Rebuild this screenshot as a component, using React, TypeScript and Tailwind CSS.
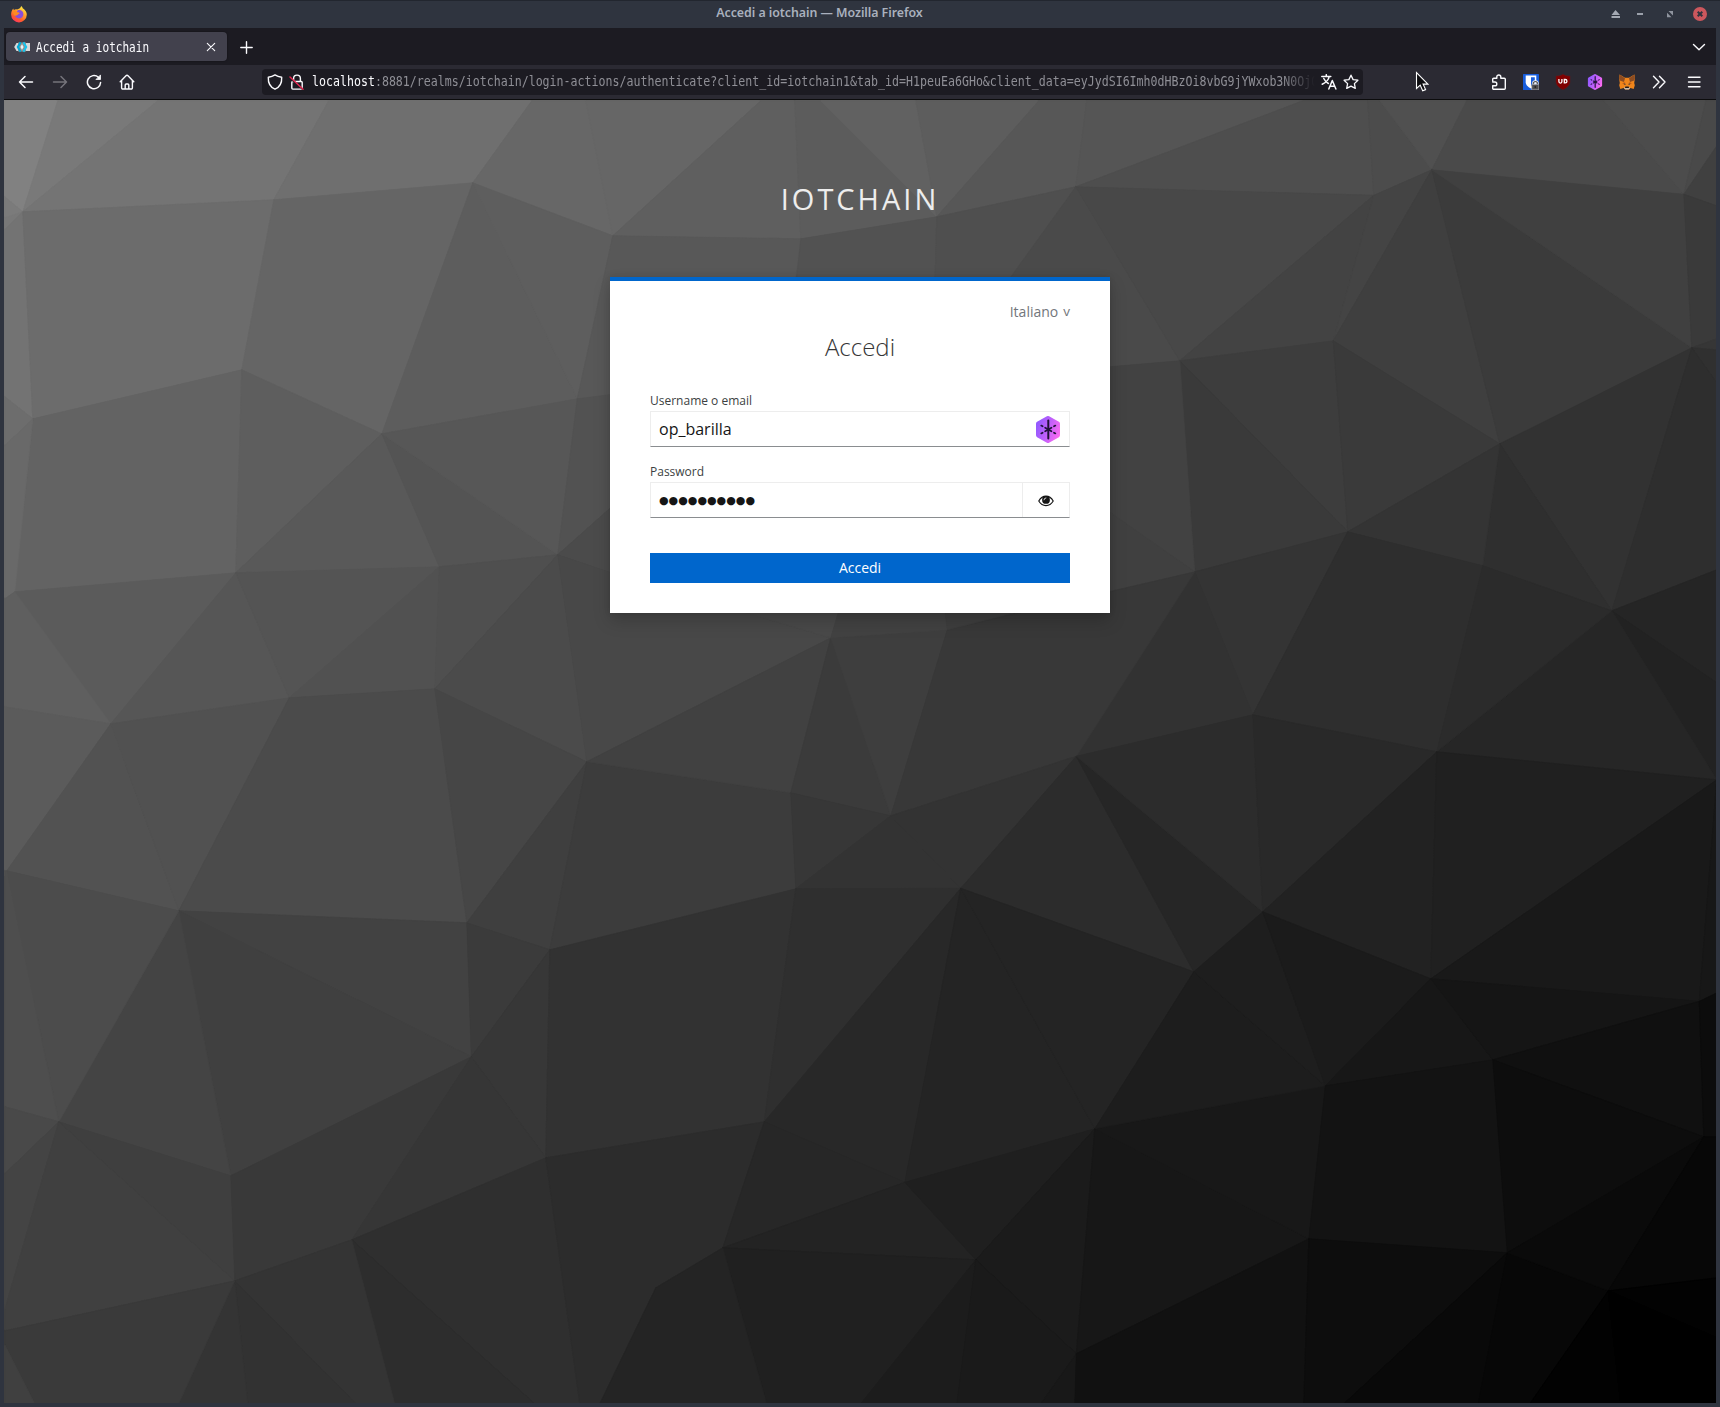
import React from "react";

type Facet = [string, string];

/* Low-poly backdrop, one entry per facet: fill, points. */
const facets: Facet[] = [
  ["#818181", "4,100 57,100 22,211 4,196"],
  ["#797979", "57,100 157,100 22,211"],
  ["#747474", "157,100 328,100 273,199 22,211"],
  ["#6f6f6f", "328,100 531,100 472,182 273,199"],
  ["#676767", "531,100 585,100 612,235 472,182"],
  ["#666666", "585,100 760,100 612,235"],
  ["#5f5f5f", "760,100 794,100 800,238 612,235"],
  ["#5c5c5c", "794,100 820,100 936,216 800,238"],
  ["#616161", "820,100 915,100 936,216"],
  ["#5d5d5d", "915,100 1038,100 936,216"],
  ["#575757", "1038,100 1086,100 1075,186 936,216"],
  ["#555555", "1086,100 1302,100 1075,186"],
  ["#4e4e4e", "1302,100 1367,100 1373,194.5 1075,186"],
  ["#4c4c4c", "1367,100 1379,100 1431,169 1373,194.5"],
  ["#505050", "1379,100 1466,100 1431,169"],
  ["#4a4a4a", "1466,100 1603,100 1683,193.5 1431,169"],
  ["#4c4c4c", "1603,100 1705,100 1683,193.5"],
  ["#494949", "1705,100 1716,100 1716,145 1683,193.5"],
  ["#404040", "1716,145 1716,205 1683,193.5"],
  ["#7b7b7b", "4,196 22,211 4,217"],
  ["#787878", "22,211 4,217 4,229"],
  ["#737373", "22,211 4,229 4,396 32,418"],
  ["#6c6c6c", "22,211 273,199 241,369 32,418"],
  ["#6d6d6d", "4,396 32,418 4,445"],
  ["#656565", "273,199 472,182 381,433 241,369"],
  ["#5d5d5d", "472,182 381,433 576.5,398"],
  ["#5e5e5e", "472,182 612,235 576.5,398"],
  ["#585858", "612,235 800,238 795,277 760,420 576.5,398"],
  ["#525252", "800,238 936,216 934,290 795,290"],
  ["#4f4f4f", "936,216 1075,186 1008,290 934,290"],
  ["#4a4a4a", "1075,186 1000,290 1000,375 1179,360"],
  ["#484848", "1075,186 1373,194.5 1179,360"],
  ["#434343", "1373,194.5 1179,360 1332.5,340"],
  ["#444444", "1373,194.5 1431,169 1332.5,340"],
  ["#3f3f3f", "1431,169 1332.5,340 1499,443"],
  ["#3b3b3b", "1431,169 1499,443 1691,347"],
  ["#404040", "1431,169 1683,193.5 1691,347"],
  ["#3a3a3a", "1683,193.5 1716,205 1716,338 1691,347"],
  ["#363636", "1691,347 1716,338 1716,349"],
  ["#303030", "1691,347 1716,349 1716,382"],
  ["#3d3d3d", "1179,360 1332.5,340 1347,531"],
  ["#3a3a3a", "1332.5,340 1499,443 1347,531"],
  ["#3a3a3a", "1179,360 1347,531 1194,571"],
  ["#424242", "1179,360 1194,571 1110,513 1050,470 1050,371"],
  ["#404040", "1050,470 1194,571 1110,590 1050,605"],
  ["#323232", "1499,443 1691,347 1611,610"],
  ["#2f2f2f", "1499,443 1611,610 1482,565"],
  ["#343434", "1499,443 1347,531 1482,565"],
  ["#2e2e2e", "1691,347 1611,610 1716,569 1716,382"],
  ["#252525", "1611,610 1716,569 1716,682"],
  ["#222222", "1611,610 1716,682 1716,779"],
  ["#262626", "1611,610 1436,751 1716,779"],
  ["#343434", "1347,531 1194,571 1252,714"],
  ["#323232", "1194,571 1075.5,755.5 1252,714"],
  ["#2e2e2e", "1347,531 1252,714 1436,751 1482,565"],
  ["#2b2b2b", "1482,565 1436,751 1611,610"],
  ["#636363", "32,418 241,369 235,572 14,591"],
  ["#696969", "4,445 32,418 14,591 4,598"],
  ["#5e5e5e", "241,369 381,433 235,572"],
  ["#595959", "381,433 235,572 438.5,566"],
  ["#545454", "381,433 438.5,566 557,554"],
  ["#575757", "381,433 576.5,398 557,554"],
  ["#525252", "576.5,398 557,554 640,480 640,390"],
  ["#4b4b4b", "557,554 640,480 640,582"],
  ["#5b5b5b", "14,591 235,572 110,723"],
  ["#565656", "235,572 110,723 288.5,697"],
  ["#545454", "235,572 288.5,697 438.5,566"],
  ["#515151", "288.5,697 438.5,566 434,688"],
  ["#4f4f4f", "438.5,566 557,554 434,688"],
  ["#4b4b4b", "557,554 434,688 586,761"],
  ["#484848", "557,554 586,761 830,637 749,613 640,582"],
  ["#5f5f5f", "14,591 4,598 4,706 110,723"],
  ["#5b5b5b", "4,706 110,723 6,870 4,875"],
  ["#525252", "110,723 6,870 178,910"],
  ["#515151", "110,723 288.5,697 178,910"],
  ["#4b4b4b", "288.5,697 434,688 466,922 178,910"],
  ["#464646", "434,688 586,761 466,922"],
  ["#3f3f3f", "586,761 466,922 549,949"],
  ["#3c3c3c", "586,761 790,792 795,888 549,949"],
  ["#414141", "586,761 790,792 830,637"],
  ["#3b3b3b", "790,792 830,637 890,815"],
  ["#3e3e3e", "830,637 946.5,629 890,815"],
  ["#383838", "946.5,629 1194,571 1075.5,755.5 890,815"],
  ["#494949", "749,613 740,600 841,600 830,637"],
  ["#424242", "830,637 841,600 943,600 946.5,629"],
  ["#3e3e3e", "946.5,629 943,600 1060,600"],
  ["#373737", "790,792 890,815 795,888"],
  ["#333333", "890,815 795,888 960,887.5"],
  ["#333333", "890,815 960,887.5 1075.5,755.5"],
  ["#2c2c2c", "1075.5,755.5 960,887.5 1193,971"],
  ["#262626", "1075.5,755.5 1193,971 1262,911"],
  ["#2c2c2c", "1075.5,755.5 1252,714 1262,911"],
  ["#292929", "1252,714 1436,751 1262,911"],
  ["#222222", "1436,751 1262,911 1430,978"],
  ["#202020", "1436,751 1716,779 1430,978"],
  ["#191919", "1430,978 1716,779 1698.5,1000.5"],
  ["#171717", "1716,779 1716,992 1698.5,1000.5"],
  ["#424242", "178,910 466,922 470.5,1056"],
  ["#404040", "178,910 470.5,1056 230,1175"],
  ["#444444", "178,910 58,1121 230,1175"],
  ["#4c4c4c", "6,870 178,910 58,1121"],
  ["#4e4e4e", "4,870 6,870 58,1121 4,1106"],
  ["#494949", "4,1106 58,1121 4,1173"],
  ["#444444", "4,1173 58,1121 4,1309"],
  ["#404040", "58,1121 234,1280 4,1330 4,1309"],
  ["#3f3f3f", "58,1121 230,1175 234,1280"],
  ["#3b3b3b", "466,922 549,949 470.5,1056"],
  ["#373737", "549,949 470.5,1056 545,1157"],
  ["#323232", "549,949 795,888 763.5,1121 545,1157"],
  ["#2f2f2f", "795,888 960,887.5 763.5,1121"],
  ["#393939", "230,1175 470.5,1056 351,1239 234,1280"],
  ["#363636", "470.5,1056 545,1157 351,1239"],
  ["#2f2f2f", "351,1239 545,1157 579,1403 534,1403"],
  ["#2d2d2d", "351,1239 534,1403 394,1403"],
  ["#2c2c2c", "545,1157 763.5,1121 722,1247 655,1287 599,1403 579,1403"],
  ["#343434", "234,1280 351,1239 394,1403 355,1403"],
  ["#323232", "234,1280 355,1403 247,1403"],
  ["#343434", "234,1280 247,1403 178,1403"],
  ["#3a3a3a", "234,1280 178,1403 34,1403 4,1344 4,1330"],
  ["#404040", "4,1344 34,1403 4,1403"],
  ["#282828", "763.5,1121 960,887.5 904,1181.5"],
  ["#242424", "960,887.5 904,1181.5 1094,1128"],
  ["#242424", "960,887.5 1193,971 1094,1128"],
  ["#272727", "763.5,1121 904,1181.5 722,1247"],
  ["#232323", "904,1181.5 722,1247 975,1259"],
  ["#202020", "722,1247 975,1259 860,1403 766,1403"],
  ["#242424", "722,1247 655,1287 599,1403 766,1403"],
  ["#1f1f1f", "904,1181.5 1094,1128 975,1259"],
  ["#1b1b1b", "975,1259 1094,1128 1075.5,1353"],
  ["#1c1c1c", "975,1259 860,1403 956,1403"],
  ["#1a1a1a", "975,1259 956,1403 1040,1403 1075.5,1353"],
  ["#181818", "1075.5,1353 1040,1403 1074,1403"],
  ["#171717", "1094,1128 1075.5,1353 1308,1238"],
  ["#181818", "1094,1128 1324.5,1085 1308,1238"],
  ["#1d1d1d", "1094,1128 1193,971 1324.5,1085"],
  ["#1e1e1e", "1193,971 1262,911 1324.5,1085"],
  ["#1b1b1b", "1262,911 1430,978 1324.5,1085"],
  ["#171717", "1430,978 1324.5,1085 1492,1059"],
  ["#151515", "1430,978 1492,1059 1698.5,1000.5"],
  ["#131313", "1324.5,1085 1492,1059 1506.5,1252 1308,1238"],
  ["#101010", "1492,1059 1698.5,1000.5 1703,1136"],
  ["#0d0d0d", "1492,1059 1703,1136 1506.5,1252"],
  ["#0c0c0c", "1698.5,1000.5 1716,992 1716,1136 1703,1136"],
  ["#111111", "1075.5,1353 1308,1238 1303,1403 1074,1403"],
  ["#0d0d0d", "1308,1238 1506.5,1252 1343,1403 1303,1403"],
  ["#090909", "1506.5,1252 1343,1403 1477.5,1403"],
  ["#070707", "1506.5,1252 1607.5,1290 1529,1403 1477.5,1403"],
  ["#0a0a0a", "1506.5,1252 1703,1136 1607.5,1290"],
  ["#070707", "1703,1136 1716,1136 1716,1277 1607.5,1290"],
  ["#020202", "1607.5,1290 1716,1277 1716,1337"],
  ["#020202", "1607.5,1290 1529,1403 1620,1403"],
  ["#000000", "1607.5,1290 1716,1337 1716,1403 1620,1403"],
];

function Backdrop() {
  return (
    <svg className="absolute inset-0 h-full w-full" viewBox="4 100 1712 1303" preserveAspectRatio="none" aria-hidden="true">
      <g id="facets">
        {facets.map(([fill, points], i) => (
          <polygon key={i} points={points} fill={fill} stroke={fill} strokeWidth="0.7" strokeLinejoin="round" />
        ))}
      </g>
      <use href="#facets" x="0.8" y="0.8" />
    </svg>
  );
}

function Line({ children, className = "", w = 1.4, size = 16 }: { children: React.ReactNode; className?: string; w?: number; size?: number }) {
  return (
    <svg width={size} height={size} viewBox="0 0 16 16" fill="none" stroke="currentColor" strokeWidth={w} strokeLinecap="round" strokeLinejoin="round" className={"shrink-0 " + className}>
      {children}
    </svg>
  );
}

function FirefoxLogo() {
  return (
    <svg width="18" height="18" viewBox="0 0 18 18" className="shrink-0">
      <defs>
        <linearGradient id="ffBody" x1="0.8" y1="0.05" x2="0.3" y2="1">
          <stop offset="0" stopColor="#fff044" />
          <stop offset="0.4" stopColor="#ffa02c" />
          <stop offset="0.75" stopColor="#ff5a2c" />
          <stop offset="1" stopColor="#ff3565" />
        </linearGradient>
      </defs>
      <path d="M11.2 1c1 .9 1.5 1.8 1.7 2.6 1.5.5 3.9 3.2 3.9 6.100A7.900 7.900 0 0 1 9 17.400 7.900 7.900 0 0 1 1.100 9.500c0-2.300.8-4.500 2.200-6 .1.800.3 1.200.7 1.500C5 4.300 6 4.200 7 4.500 8.700 4 10.500 3.200 11.200 1Z" fill="url(#ffBody)" />
      <path d="M7.500 5.500c2.500-1.400 5.700.3 5.900 3.400.1 2.700-1.900 4.500-4.400 4.500-2.300 0-4.200-1.600-4.300-3.600 1 .9 2.300.6 3.300-.4.500-.5 1.300-.5 1.500-.9-.1-.8-1.600-.8-2.800-1.100Z" fill="#8a4fd8" />
      <path d="M2.500 5.500c1.500-.6 3.500-.3 4.700 1.700 1.200.2 2.300.4 2.300 1-.7 1-1.900.8-2.500 1.800-.7.800-2 .9-3 .2Z" fill="#ff8a22" />
    </svg>
  );
}

function KeycloakIcon() {
  return (
    <svg width="16" height="16" viewBox="0 0 16 16" className="shrink-0">
      <path d="M2.500 4H16v8H2.500L.2 8Z" fill="#d9d9d9" />
      <path d="M4 3.500h8v9H4z" fill="#9b8f8a" />
      <path d="M6.600 3.200 3.900 8l2.700 4.800" fill="none" stroke="#00a9d6" strokeWidth="2.200" />
      <path d="M9.400 3.200 12.100 8l-2.700 4.800" fill="none" stroke="#19c3ec" strokeWidth="2.200" />
      <path d="M8 5.200 9.600 8 8 10.800 6.400 8Z" fill="#e6f7fb" />
    </svg>
  );
}

function HexIcon({ w, h, id }: { w: number; h: number; id: string }) {
  return (
    <svg width={w} height={h} viewBox="0 0 24 27" className="shrink-0">
      <defs>
        <linearGradient id={id} x1="0" y1="0.3" x2="1" y2="0.7">
          <stop offset="0" stopColor="#9059ff" />
          <stop offset="0.5" stopColor="#c060fb" />
          <stop offset="1" stopColor="#ff6bf0" />
        </linearGradient>
      </defs>
      <path d="M10.900.3a2.200 2.200 0 0 1 2.200 0l9.800 5.500A2.200 2.200 0 0 1 24 7.700v11.600a2.200 2.200 0 0 1-1.100 1.900l-9.800 5.500a2.200 2.200 0 0 1-2.200 0l-9.800-5.500A2.200 2.200 0 0 1 0 19.300V7.700a2.200 2.200 0 0 1 1.100-1.900Z" fill={`url(#${id})`} />
      <g stroke="#20123a" strokeLinecap="round" fill="none">
        <path d="M12.300 4.500v18" strokeWidth="2" />
        <path d="m12.300 13.500 7.700-4.300M12.300 13.500 20 17.800M12.300 13.500 4.600 9.200M12.300 13.500l-7.700 4.300" strokeWidth="1.700" strokeDasharray="3.600 2.900 1.600 9" />
      </g>
    </svg>
  );
}

function Bitwarden() {
  return (
    <svg width="16" height="16" viewBox="0 0 16 16" className="shrink-0">
      <rect width="16" height="16" rx="0.600" fill="#175ddc" />
      <path d="M2.700 1.500h10.600v6.700c0 3-2.800 5.200-5.300 6.300-2.500-1.100-5.300-3.300-5.300-6.300Z" fill="#fff" />
      <path d="M8 3.200h3.800v5c0 1.700-1.800 3.300-3.800 4.300Z" fill="#175ddc" />
      <path d="M10.300 10.200V9.600a2.100 2.100 0 0 1 4.200 0v.6" fill="none" stroke="#eee" strokeWidth="2.400" />
      <path d="M10.300 10.500v-.9a2.100 2.100 0 0 1 4.200 0v.9" fill="none" stroke="#555" strokeWidth="1.200" />
      <rect x="8.700" y="10.300" width="7.300" height="5.700" rx="0.600" fill="#4e4e50" stroke="#c8c8c8" strokeWidth="0.700" />
      <circle cx="12.300" cy="13" r="0.900" fill="#222" />
    </svg>
  );
}

function Ublock() {
  return (
    <svg width="16" height="16" viewBox="0 0 16 16" className="shrink-0">
      <path d="M8 .3C6 1.700 3.500 2 1 2v5.500C1 11.500 4.500 14 8 15.700c3.500-1.700 7-4.200 7-8.200V2C12.500 2 10 1.700 8 .3Z" fill="#800000" stroke="#5f1a1e" strokeWidth="0.600" />
      <path d="M3.900 5v2.600a1.500 1.500 0 0 0 3 0V5" stroke="#fff" strokeWidth="1.300" fill="none" />
      <path d="M9.300 5.500h1a1.650 1.650 0 0 1 0 3.300h-1Z" fill="none" stroke="#fff" strokeWidth="1.300" />
    </svg>
  );
}

function Fox() {
  return (
    <svg width="16" height="16" viewBox="0 0 16 16" className="shrink-0">
      <path d="M.6.500 6 3.800h4L15.400.500l.5 4-.7 4.500.6 2.200-1.100 3.800-3.300-.9-1.500 1.500H6.100l-1.500-1.500-3.300.9L.2 11.200.8 9 .1 4.500Z" fill="#f0851b" />
      <path d="M.6.500 6 4.300 5 8 .8 6.500.1 4.500ZM15.400.500 10 4.300 11 8l4.200-1.500.7-2Z" fill="#8c4c22" />
      <path d="M5 8 3 9.700l2.500.8L6.200 8ZM11 8l2 1.700-2.500.8L9.800 8Z" fill="#d66a15" />
      <path d="m4.500 9.500 2 .2v1l-1.300-.2ZM11.500 9.500l-2 .2v1l1.300-.2Z" fill="#2b3242" />
      <path d="M5.500 13h5l.3 1.800-1 .8H6.200l-1-.8Z" fill="#c6b8ac" />
      <path d="M6.300 12.500h3.400l.4 1.500H5.900Z" fill="#231a17" />
    </svg>
  );
}

function TitleBar() {
  return (
    <header className="relative flex h-7 items-center border-t border-[#22262f] bg-[#2f343f] pb-px pl-[10px]">
      <FirefoxLogo />
      <div className="absolute inset-x-0 top-[3px] flex justify-center pr-[81px]">
        <span className="text-[12.4px] leading-[18px] font-semibold tracking-[-0.05px] text-[#a9b0bd] font-['Noto_Sans',sans-serif]">Accedi a iotchain — Mozilla Firefox</span>
      </div>
      <svg width="104" height="14" viewBox="0 0 104 14" className="mr-[13px] ml-auto">
        <path d="M12.500 3 17 8H8.500ZM8.500 9H17v2H8.500Z" fill="#a4a9b3" />
        <rect x="34" y="6" width="6" height="2" fill="#9ba0aa" />
        <path d="M65.500 4H70v4.500ZM64 5.700v4.500h4.500Z" fill="#8f949e" />
        <circle cx="97" cy="7" r="7" fill="#cc575d" />
        <path d="m94.700 4.700 4.600 4.600m0-4.600-4.600 4.600" stroke="#2f343f" strokeWidth="2" />
      </svg>
    </header>
  );
}

function TabStrip() {
  return (
    <div className="flex h-[37px] items-center bg-[#1c1b22] pl-[2px] text-[#fbfbfe]">
      <div className="flex h-[29px] w-[221px] items-center rounded bg-[#42414d] pl-2 shadow-[0_0_2px_rgba(0,0,0,0.5)]">
        <KeycloakIcon />
        <span className="ml-[6px] w-[113px] origin-left scale-x-[0.789] whitespace-nowrap text-[14px] leading-5 font-['DejaVu_Sans_Mono',monospace]">Accedi a iotchain</span>
        <Line className="mr-[8px] ml-auto" w={1.1}>
          <path d="m4.300 4.300 7.400 7.400m0-7.400-7.400 7.400" />
        </Line>
      </div>
      <Line className="ml-[12px]" w={1.4}>
        <path d="M8 2.300v11.400M2.300 8h11.400" transform="translate(-0.5 0.5)" />
      </Line>
      <Line className="mr-[9px] ml-auto" w={1.4}>
        <path d="m2.500 5.500 5.500 5.300 5.500-5.300" />
      </Line>
    </div>
  );
}

function NavBar() {
  return (
    <div className="flex h-[35px] items-center border-b border-[#0c0c0d] bg-[#2b2a33] text-[#fbfbfe]">
      <div className="flex items-center gap-[18px] pl-[14px]">
        <Line w={1.5}><path d="M1.500 8h13M7 2.500 1.500 8 7 13.500" /></Line>
        <Line w={1.5} className="text-[#75747b]"><path d="M1.500 8h13M9 2.500 14.500 8 9 13.500" /></Line>
        <Line w={1.5}>
          <path d="M14.600 8.500a6.600 6.600 0 1 1-2.200-5.300" />
          <path d="M14.500 1.300v4.200h-4.200Z" fill="currentColor" stroke="currentColor" strokeWidth="0.8" />
        </Line>
        <Line w={1.4} className="-ml-px"><path d="M1.200 7.700 7 1.700a1.400 1.400 0 0 1 2 0l5.800 6M2.600 6.500v7.300a1.200 1.200 0 0 0 1.200 1.200h8.400a1.200 1.200 0 0 0 1.200-1.200V6.500M6.200 15v-4a1 1 0 0 1 1-1h1.600a1 1 0 0 1 1 1v4" /></Line>
      </div>
      <div className="ml-[127px] flex h-[26px] w-[1101px] items-center rounded bg-[#1c1b22] pl-[5px]">
        <Line w={1.4}><path d="M8 .9c2 1.300 4.200 2 6.700 2.300.3 5.400-1.500 9.700-6.700 12C2.800 12.900 1 8.600 1.300 3.200 3.800 2.900 6 2.200 8 .9Z" /></Line>
        <svg width="16" height="16" viewBox="0 0 16 16" fill="none" strokeLinecap="round" className="ml-[6px] shrink-0">
          <rect x="2.800" y="7.500" width="10.400" height="7.600" rx="1" stroke="#fbfbfe" strokeWidth="1.400" />
          <path d="M4.600 7.300V4.500a3.400 3.400 0 0 1 6.800 0v2.800" stroke="#fbfbfe" strokeWidth="1.400" />
          <path d="m1.400 4.600 12.800 11" stroke="#1c1b22" strokeWidth="1.500" />
          <path d="m1 3 13 12.300" stroke="#e22850" strokeWidth="1.500" />
        </svg>
        <div className="ml-[7px] w-[1003px] overflow-hidden pb-[2px] [mask-image:linear-gradient(to_right,black_970px,transparent_1003px)]">
          <span className="block w-[1300px] origin-left scale-x-[0.8005] whitespace-nowrap text-[14.5px] leading-5 text-[#8f8f96] font-['DejaVu_Sans_Mono',monospace]">
            <span className="text-[#fbfbfe]">localhost</span>:8881/realms/iotchain/login-actions/authenticate?client_id=iotchain1&amp;tab_id=H1peuEa6GHo&amp;client_data=eyJydSI6Imh0dHBzOi8vbG9jYWxob3N0OjQ
          </span>
        </div>
        <Line w={1.5} className="ml-[6px]">
          <path d="M.8 2.600h9M5.300.7v1.900M8.200 2.600C7.600 5.500 5 8.500 1.200 10.200M2.800 4.500c1 2.200 2.700 4 4.600 5M7.800 15l3.500-8.500L14.900 15M9 12.300h4.700" />
        </Line>
        <Line w={1.3} className="ml-[6px]">
          <path d="m8 1.200 2.100 4.400 4.800.6-3.500 3.400.9 4.800L8 12.100l-4.300 2.300.9-4.800L1.100 6.200l4.800-.6Z" />
        </Line>
      </div>
      <div className="ml-auto flex items-center gap-4 pr-[14px]">
        <Line w={1.4} className="-mr-px"><path d="M1.700 7V5.300a1 1 0 0 1 1-1h3.100V3a2 2 0 0 1 4 0v1.300h3.500a1 1 0 0 1 1 1v8.900a1 1 0 0 1-1 1H2.700a1 1 0 0 1-1-1v-2.400h2.200a1.700 1.700 0 0 0 0-3.800H1.700" transform="translate(-1 0)" /></Line>
        <Bitwarden />
        <Ublock />
        <HexIcon w={16} h={16} id="hexSmall" />
        <Fox />
        <Line w={1.4}><path d="m2.500 2.300 5.500 5.700-5.500 5.700M8.500 2.300 14 8l-5.500 5.700" /></Line>
        <Line w={1.4} className="ml-[3px]"><path d="M2.500 3.300h11.500M2.500 8h11.500M2.500 12.700h11.500" /></Line>
      </div>
    </div>
  );
}

function Eye() {
  return (
    <svg width="16" height="12" viewBox="0 0 16 12" className="relative top-[0.5px]">
      <path d="M.8 6C2.500 3.100 5 1.200 8 1.200S13.500 3.100 15.200 6C13.500 8.900 11 10.600 8 10.600S2.500 8.900.8 6Z" fill="#fff" stroke="#151515" strokeWidth="1.200" />
      <circle cx="8" cy="4.900" r="3.900" fill="#151515" />
      <path d="M6 4.800A2 2 0 0 1 7.900 2.900" fill="none" stroke="#fff" strokeWidth="0.800" strokeLinecap="round" />
    </svg>
  );
}

function LoginCard() {
  return (
    <main className="flex h-[336px] w-[500px] flex-col border-t-4 border-[#0066cc] bg-white px-10 pt-[20px] text-[#151515] shadow-[0_8px_16px_rgba(3,3,3,0.18),0_0_6px_rgba(3,3,3,0.1)]">
      <div className="flex h-[21px] items-center justify-end text-[14px] text-[#72767b]">
        <span>Italiano</span>
        <span className="relative -top-[1px] ml-[5px] text-[13.5px] leading-4">v</span>
      </div>
      <h1 className="mt-[9px] text-center text-[24px] leading-[31px] font-light text-[#363636]">Accedi</h1>
      <label className="mt-[30px] text-[12px] leading-[18px] text-[#3c3f42]">Username o email</label>
      <div className="mt-[1px] flex h-9 items-center justify-between border border-[#ededed] border-b-[#8a8d90] pr-[9px] pl-2">
        <span className="text-[16px] leading-6">op_barilla</span>
        <HexIcon w={24} h={27} id="hexLarge" />
      </div>
      <label className="mt-[16px] text-[12px] leading-[18px] text-[#3c3f42]">Password</label>
      <div className="mt-[1px] flex h-9 border border-[#ededed] border-b-[#8a8d90]">
        <div className="flex flex-1 items-center border-r border-[#ededed] pt-[2px] pl-2">
          <span className="text-[11px] leading-6 font-['DejaVu_Sans',sans-serif]">●●●●●●●●●●</span>
        </div>
        <button className="flex w-[46px] items-center justify-center" aria-label="Mostra password">
          <Eye />
        </button>
      </div>
      <button className="mt-[35px] h-[30px] bg-[#0066cc] pb-[2px] text-[14px] leading-[21px] text-white">Accedi</button>
    </main>
  );
}

export default function App() {
  return (
    <div className="flex h-[1407px] w-[1720px] flex-col overflow-hidden bg-[#2f343f] font-['Open_Sans',sans-serif]">
      <TitleBar />
      <div className="relative mx-1 mb-1 flex flex-1 flex-col">
        <TabStrip />
        <NavBar />
        <svg width="14" height="22" viewBox="0 0 14 22" className="absolute top-[43px] left-[1411px]">
          <path d="M1.500 1.500v16l3.700-3.400 2.500 5.700 2.900-1.200-2.500-5.500h4.800Z" fill="#0d0d10" stroke="#fff" strokeWidth="1.100" />
        </svg>
        <section className="relative flex flex-1 flex-col items-center">
          <Backdrop />
          <h2 className="relative mt-[79px] mb-[58px] text-[29px] leading-[40px] tracking-[3px] text-[#ededed]">IOTCHAIN</h2>
          <div className="relative">
            <LoginCard />
          </div>
        </section>
      </div>
    </div>
  );
}
